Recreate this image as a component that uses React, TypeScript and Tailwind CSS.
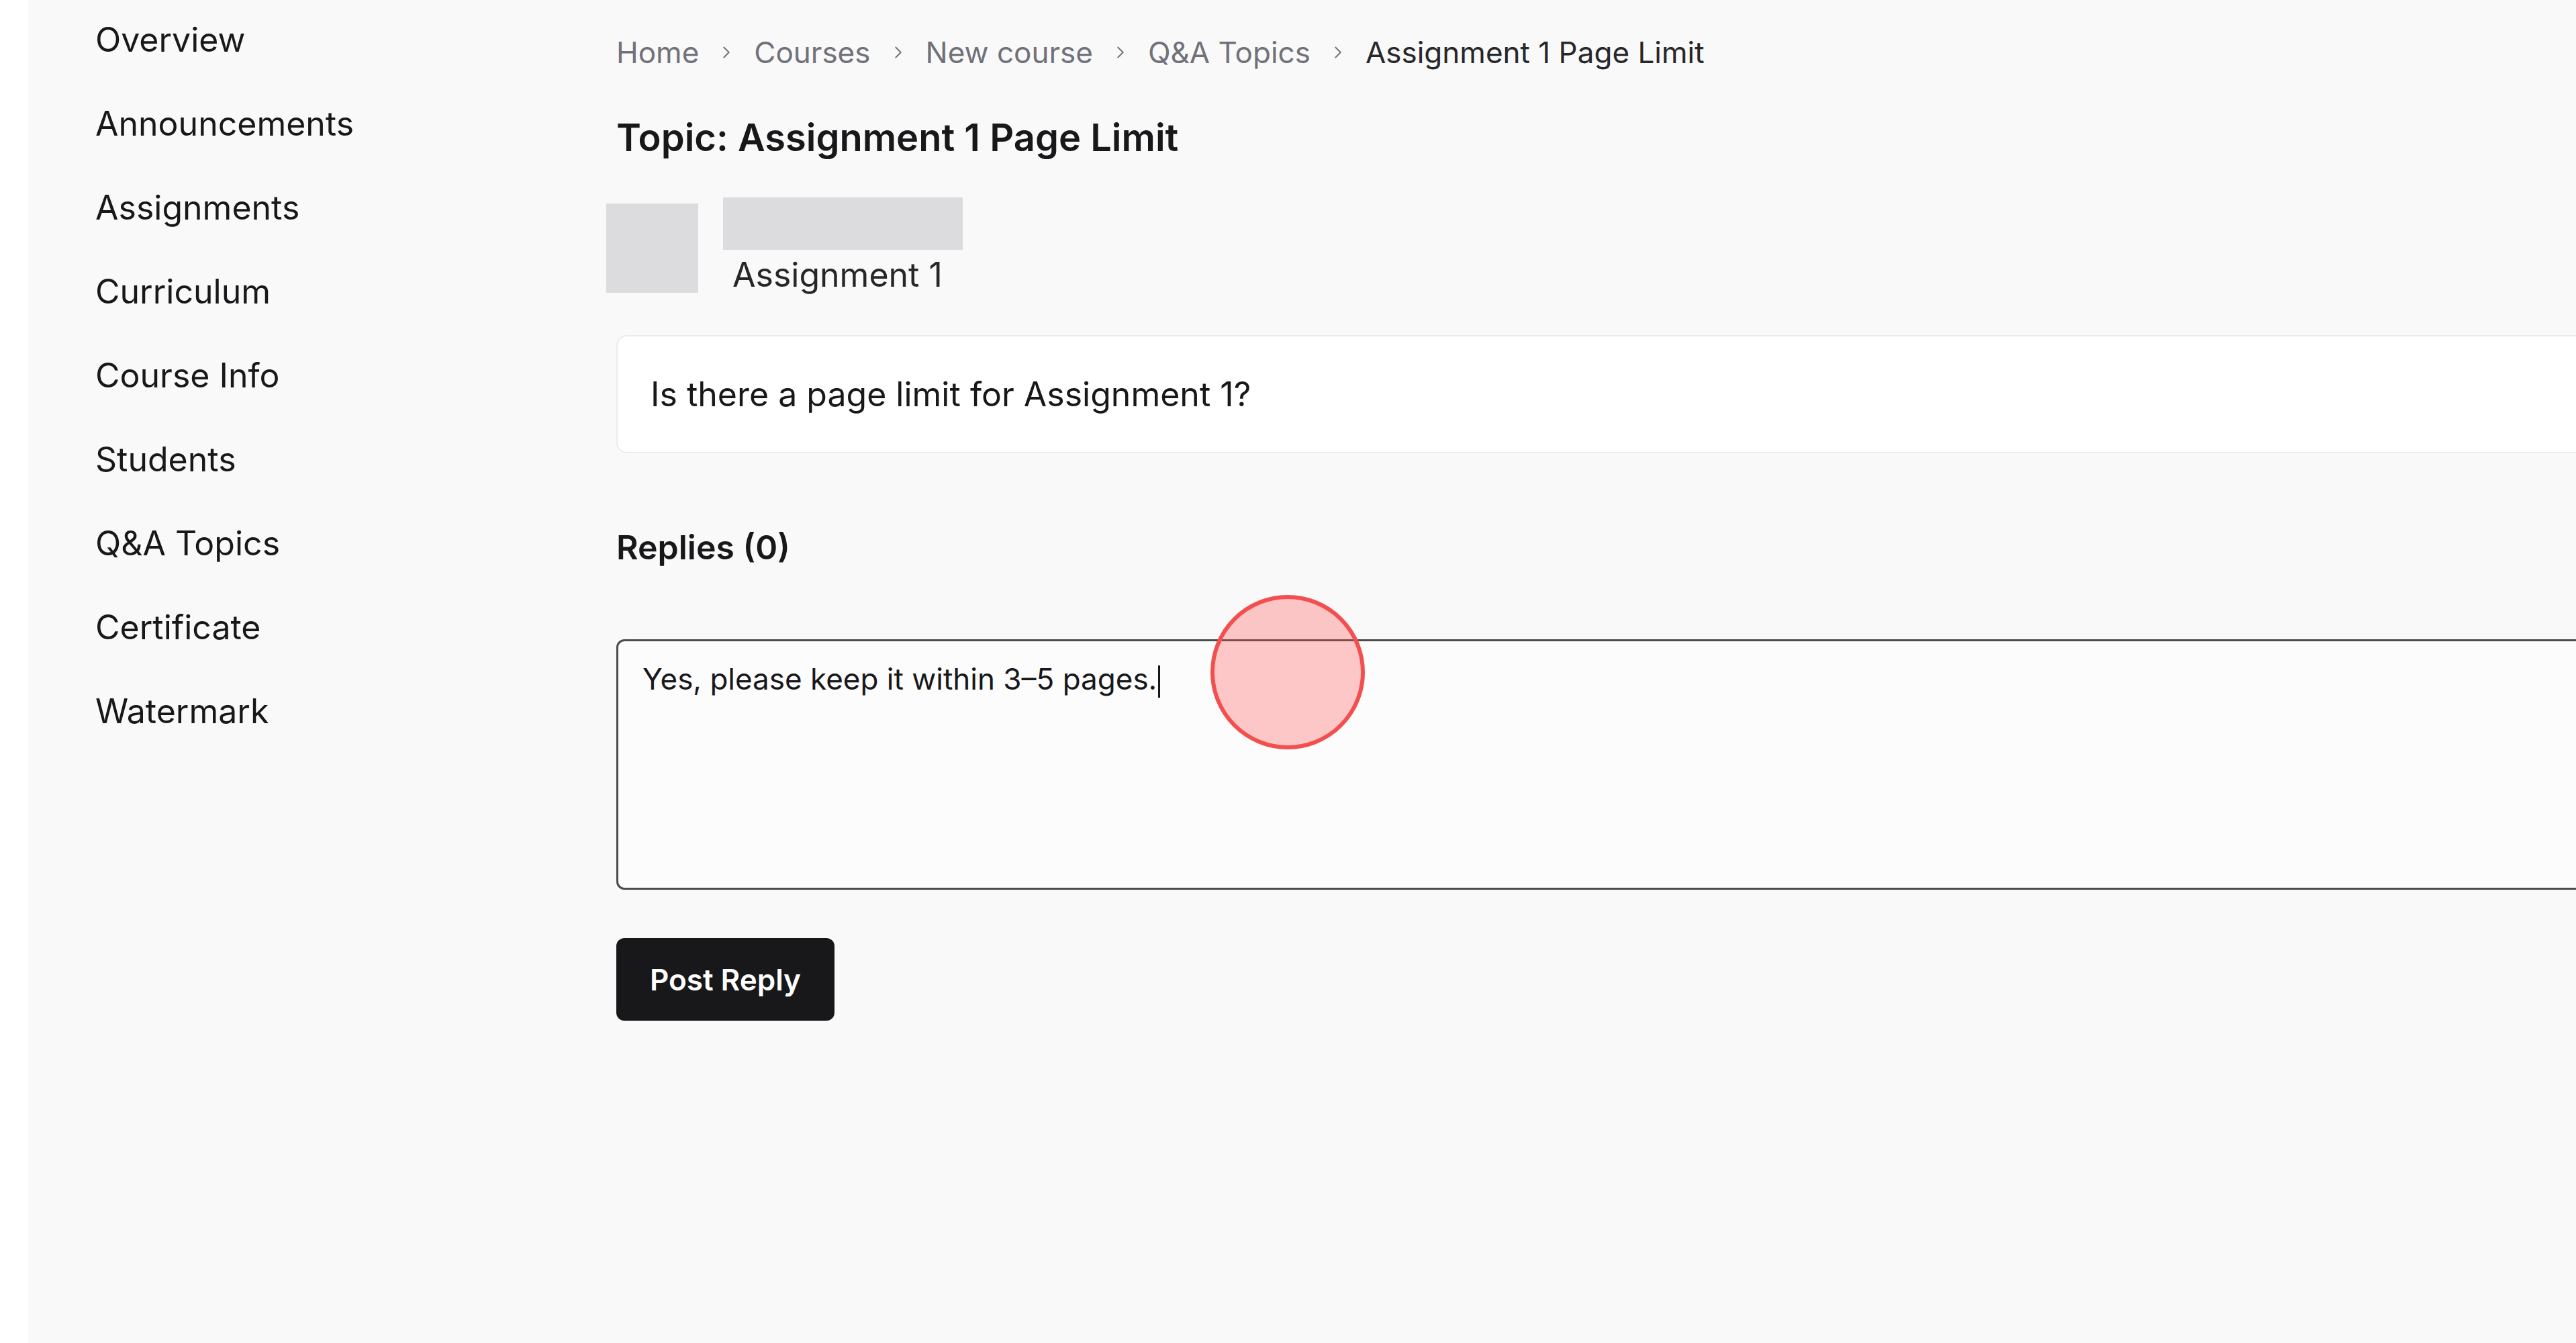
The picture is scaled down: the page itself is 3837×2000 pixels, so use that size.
import React from "react";
import { ChevronRight } from "lucide-react";

const navItems = [
  "Overview",
  "Announcements",
  "Assignments",
  "Curriculum",
  "Course Info",
  "Students",
  "Q&A Topics",
  "Certificate",
  "Watermark",
];

const crumbs = ["Home", "Courses", "New course", "Q&A Topics"];

const App = () => {
  return (
    <div
      className="relative flex w-screen h-[2000px] overflow-hidden bg-white text-[#18181b]"
      style={{ fontFamily: "Inter, 'Noto Sans', sans-serif" }}
    >
      <div className="w-[42px] shrink-0 bg-white" />
      <div className="flex flex-1 bg-[#f9f9f9]">
        {/* Sidebar */}
        <aside className="w-[876px] shrink-0 pl-[100px] pt-[29px]">
          <nav className="flex flex-col gap-[65px]">
            {navItems.map((item) => (
              <a key={item} className="text-[50px] leading-[60px] text-[#18181b]">
                {item}
              </a>
            ))}
          </nav>
        </aside>

        {/* Main */}
        <main className="w-[3000px] shrink-0 pt-[48px]">
          <div className="flex items-center text-[44px] leading-[60px]">
            {crumbs.map((c) => (
              <React.Fragment key={c}>
                <span className="text-[#71717a]">{c}</span>
                <ChevronRight className="mx-[26px] w-[30px] h-[30px] text-[#71717a]" strokeWidth={1.5} />
              </React.Fragment>
            ))}
            <span className="text-[#27272a]">Assignment 1 Page Limit</span>
          </div>

          <h1 className="mt-[62px] text-[56px] leading-[70px] font-semibold">
            Topic: Assignment 1 Page Limit
          </h1>

          <div className="mt-[54px] flex items-start">
            <div className="ml-[-15px] mt-[9px] w-[137px] h-[133px] bg-[#dcdcde]" />
            <div className="ml-[37px] flex flex-col">
              <div className="w-[357px] h-[78px] bg-[#dcdcde]" />
              <span className="ml-[14px] mt-[9px] text-[50px] leading-[56px] text-[#27272a]">
                Assignment 1
              </span>
            </div>
          </div>

          <div className="mt-[62px] h-[176px] flex items-center rounded-[16px] border-2 border-[#ececec] bg-white pl-[49px]">
            <p className="text-[50px] leading-[60px]">Is there a page limit for Assignment 1?</p>
          </div>

          <h2 className="mt-[110px] text-[50px] leading-[60px] font-semibold">Replies (0)</h2>

          <div className="mt-[107px] h-[373px] rounded-[12px] border-[3px] border-[#4b4b4b] bg-[#fcfcfc] pl-[36px] pt-[28px]">
            <p className="text-[44px] leading-[56px]">
              Yes, please keep it within 3–5 pages.
              <span className="inline-block ml-[2px] w-[3px] h-[48px] align-middle bg-[#18181b]" />
            </p>
          </div>

          <button className="mt-[72px] w-[325px] h-[123px] rounded-[12px] bg-[#18181b] text-white text-[44px] font-semibold">
            Post Reply
          </button>
        </main>
      </div>

      {/* click indicator */}
      <div className="absolute left-[1803px] top-[886px] w-[230px] h-[230px] rounded-full border-[6px] border-[#f44f4f] bg-[#ff4d4d]/30" />
    </div>
  );
};

export default App;
